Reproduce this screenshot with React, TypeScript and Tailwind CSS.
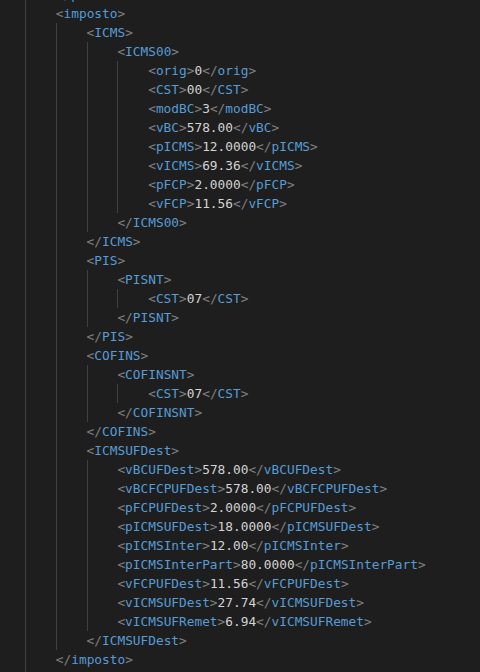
const lines: [number, string][] = [
  [1, "</prod>"],
  [1, "<imposto>"],
  [2, "<ICMS>"],
  [3, "<ICMS00>"],
  [4, "<orig>0</orig>"],
  [4, "<CST>00</CST>"],
  [4, "<modBC>3</modBC>"],
  [4, "<vBC>578.00</vBC>"],
  [4, "<pICMS>12.0000</pICMS>"],
  [4, "<vICMS>69.36</vICMS>"],
  [4, "<pFCP>2.0000</pFCP>"],
  [4, "<vFCP>11.56</vFCP>"],
  [3, "</ICMS00>"],
  [2, "</ICMS>"],
  [2, "<PIS>"],
  [3, "<PISNT>"],
  [4, "<CST>07</CST>"],
  [3, "</PISNT>"],
  [2, "</PIS>"],
  [2, "<COFINS>"],
  [3, "<COFINSNT>"],
  [4, "<CST>07</CST>"],
  [3, "</COFINSNT>"],
  [2, "</COFINS>"],
  [2, "<ICMSUFDest>"],
  [3, "<vBCUFDest>578.00</vBCUFDest>"],
  [3, "<vBCFCPUFDest>578.00</vBCFCPUFDest>"],
  [3, "<pFCPUFDest>2.0000</pFCPUFDest>"],
  [3, "<pICMSUFDest>18.0000</pICMSUFDest>"],
  [3, "<pICMSInter>12.00</pICMSInter>"],
  [3, "<pICMSInterPart>80.0000</pICMSInterPart>"],
  [3, "<vFCPUFDest>11.56</vFCPUFDest>"],
  [3, "<vICMSUFDest>27.74</vICMSUFDest>"],
  [3, "<vICMSUFRemet>6.94</vICMSUFRemet>"],
  [2, "</ICMSUFDest>"],
  [1, "</imposto>"],
  [1, ""],
];

// split "<tag>value</tag>" into coloured tokens
const Tokens = ({ src }: { src: string }) => {
  const parts = src.split(/(<\/?|>)/).filter((p) => p !== "");
  let inTag = false;
  return (
    <>
      {parts.map((p, i) => {
        if (p === "<" || p === "</") {
          inTag = true;
          return (
            <span key={i} className="text-[#808080]">
              {p}
            </span>
          );
        }
        if (p === ">") {
          inTag = false;
          return (
            <span key={i} className="text-[#808080]">
              {p}
            </span>
          );
        }
        return (
          <span key={i} className={inTag ? "text-[#569cd6]" : "text-[#d4d4d4]"}>
            {p}
          </span>
        );
      })}
    </>
  );
};

export default function App() {
  return (
    <div className="w-[480px] h-[672px] overflow-hidden bg-[#1e1e1e]">
      <div
        className="-mt-[15px] flex flex-col text-[12.8px] whitespace-pre"
        style={{ fontFamily: '"DejaVu Sans Mono", monospace' }}
      >
        {lines.map(([depth, src], i) => (
          <div key={i} className="flex h-[19px] items-center">
            <div className="w-[25px] h-full shrink-0" />
            {Array.from({ length: depth }).map((_, j) => (
              <div
                key={j}
                className="w-[30.8px] h-full shrink-0 border-l border-[#404040]"
              />
            ))}
            <div className="leading-[19px]">
              <Tokens src={src} />
            </div>
          </div>
        ))}
      </div>
    </div>
  );
}
